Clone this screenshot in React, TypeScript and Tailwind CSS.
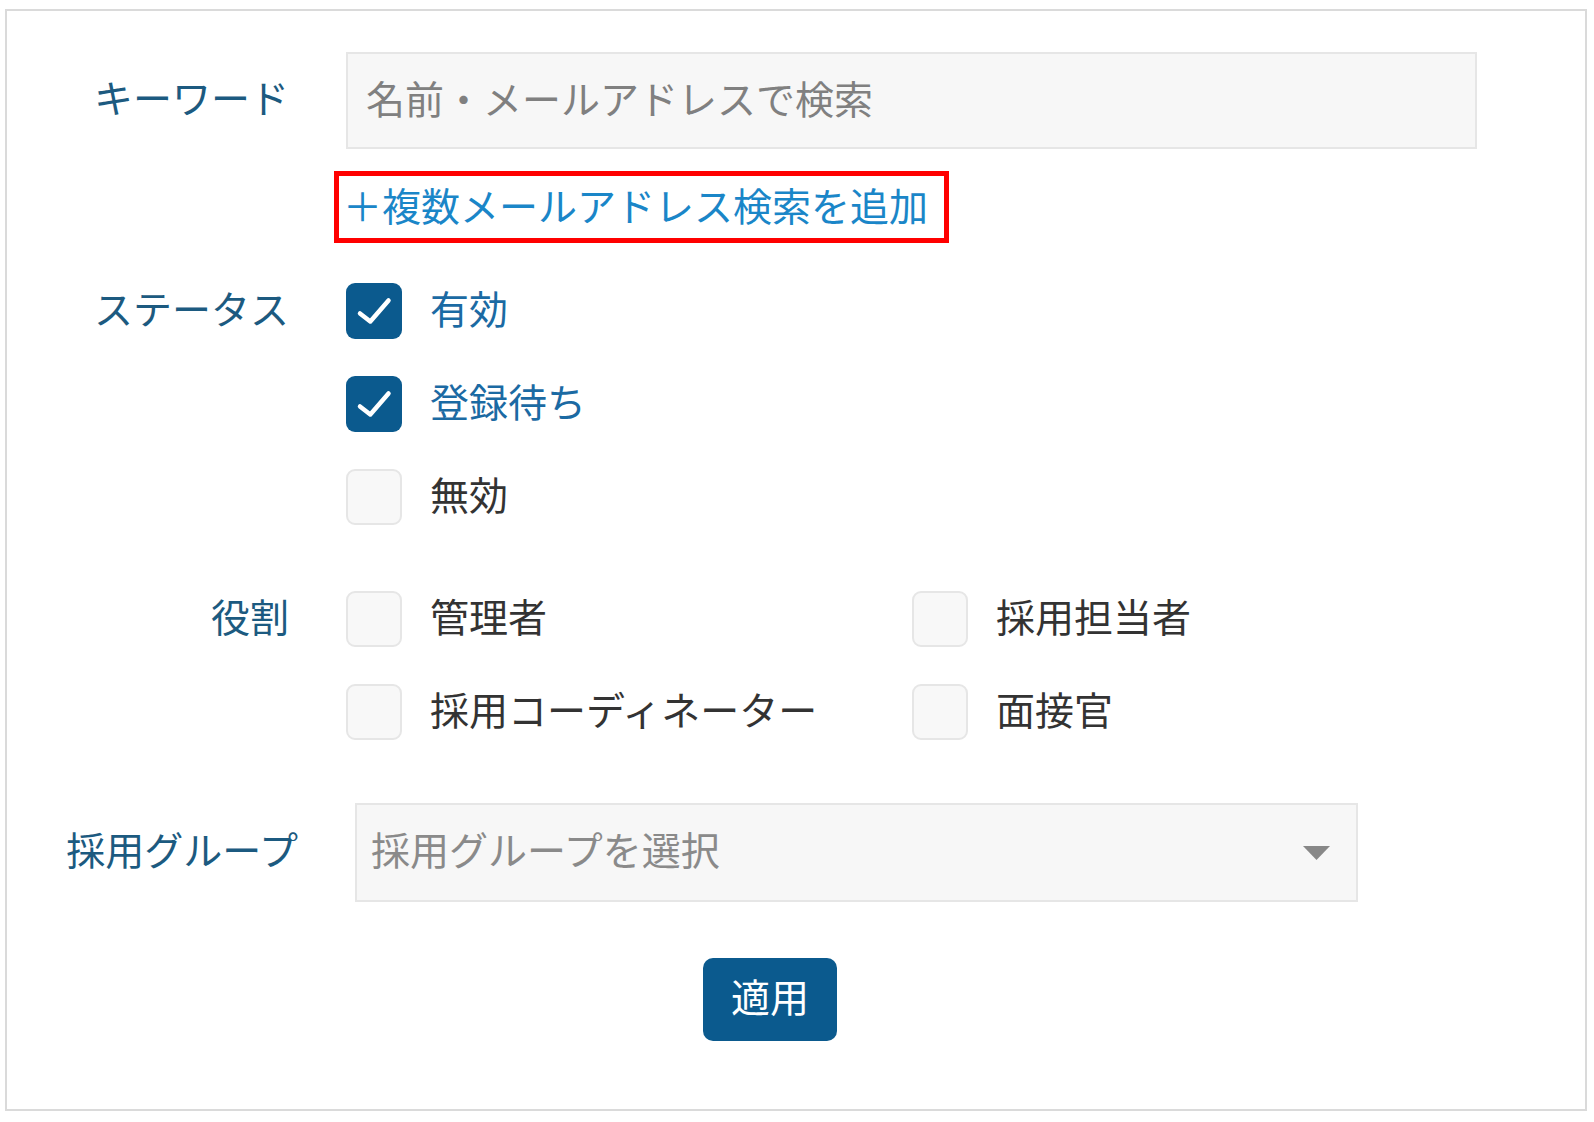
import { useState } from 'react';

const FONT = "font-['Noto_Sans_CJK_JP','Noto_Sans',sans-serif]";

function Box({ checked, onClick }: { checked: boolean; onClick: () => void }) {
  return (
    <button
      type="button"
      onClick={onClick}
      aria-pressed={checked}
      className={`h-[56px] w-[56px] shrink-0 rounded-[9px] flex items-center justify-center ${
        checked ? 'bg-[#0b5a8e]' : 'bg-[#f8f8f8] border-2 border-[#e6e6e6]'
      }`}
    >
      {checked && (
        <svg width="56" height="56" viewBox="0 0 56 56" aria-hidden="true">
          <path d="M14 30.5 L24.3 38.5 L42.5 17.5" fill="none" stroke="#fff" strokeWidth="4.5" strokeLinecap="round" strokeLinejoin="round" />
        </svg>
      )}
    </button>
  );
}

function CheckRow({ label, checked, onClick }: { label: string; checked: boolean; onClick: () => void }) {
  return (
    <label className="flex items-center gap-[28px] cursor-pointer">
      <Box checked={checked} onClick={onClick} />
      <span className={`text-[39px] leading-none pb-[8px] ${checked ? 'text-[#1b6aa3]' : 'text-[#333]'}`}>{label}</span>
    </label>
  );
}

export default function App() {
  const [status, setStatus] = useState<Record<string, boolean>>({ active: true, pending: true, inactive: false });
  const [roles, setRoles] = useState<Record<string, boolean>>({ admin: false, recruiter: false, coordinator: false, interviewer: false });

  const toggleStatus = (k: string) => setStatus((s) => ({ ...s, [k]: !s[k] }));
  const toggleRole = (k: string) => setRoles((r) => ({ ...r, [k]: !r[k] }));

  return (
    <div className={`pt-[9px] pl-[5px] bg-white min-h-screen ${FONT}`}>
      <div className="w-[1582px] h-[1102px] border-2 border-[#dadada] bg-white">
        {/* Keyword */}
        <div className="flex items-center mt-[41px]">
          <div className="w-[282px] text-right text-[39px] leading-none pb-[8px] text-[#1c5a80]">キーワード</div>
          <input
            type="text"
            placeholder="名前・メールアドレスで検索"
            className="ml-[57px] w-[1131px] h-[97px] border-2 border-[#e6e6e6] bg-[#f7f7f7] pl-[18px] pb-[8px] text-[39px] text-[#333] placeholder:text-[#808080] outline-none"
          />
        </div>

        {/* Multi email link */}
        <div className="ml-[327px] mt-[22px]">
          <div className="inline-flex items-center w-[615px] h-[72px] border-[5px] border-[#ff0000] pl-[4px] pb-[6px]">
            <a href="#" className="text-[39px] leading-none text-[#1a86c8]">＋複数メールアドレス検索を追加</a>
          </div>
        </div>

        {/* Status */}
        <div className="flex items-start mt-[40px]">
          <div className="w-[282px] h-[56px] flex items-center justify-end pb-[8px] text-[39px] leading-none text-[#1c5a80]">ステータス</div>
          <div className="ml-[57px] flex flex-col gap-[37px]">
            <CheckRow label="有効" checked={status.active} onClick={() => toggleStatus('active')} />
            <CheckRow label="登録待ち" checked={status.pending} onClick={() => toggleStatus('pending')} />
            <CheckRow label="無効" checked={status.inactive} onClick={() => toggleStatus('inactive')} />
          </div>
        </div>

        {/* Roles */}
        <div className="flex items-start mt-[66px]">
          <div className="w-[282px] h-[56px] flex items-center justify-end pb-[8px] text-[39px] leading-none text-[#1c5a80]">役割</div>
          <div className="ml-[57px] grid grid-cols-[566px_auto] gap-y-[37px]">
            <CheckRow label="管理者" checked={roles.admin} onClick={() => toggleRole('admin')} />
            <CheckRow label="採用担当者" checked={roles.recruiter} onClick={() => toggleRole('recruiter')} />
            <CheckRow label="採用コーディネーター" checked={roles.coordinator} onClick={() => toggleRole('coordinator')} />
            <CheckRow label="面接官" checked={roles.interviewer} onClick={() => toggleRole('interviewer')} />
          </div>
        </div>

        {/* Group */}
        <div className="flex items-center mt-[63px]">
          <div className="w-[291px] text-right text-[39px] leading-none pb-[8px] text-[#1c5a80]">採用グループ</div>
          <div className="ml-[57px] w-[1003px] h-[99px] border-2 border-[#e6e6e6] bg-[#f7f7f7] flex items-center justify-between pl-[14px] pr-[26px]">
            <span className="text-[39px] leading-none pb-[8px] text-[#8a8a8a]">採用グループを選択</span>
            <svg width="27" height="14" viewBox="0 0 27 14" aria-hidden="true">
              <path d="M0 0 H27 L13.5 14 Z" fill="#888" />
            </svg>
          </div>
        </div>

        {/* Apply */}
        <div className="mt-[56px] ml-[696px]">
          <button type="button" className="w-[134px] h-[83px] rounded-[10px] bg-[#0b5a8e] text-white text-[39px] leading-none pb-[8px]">
            適用
          </button>
        </div>
      </div>
    </div>
  );
}
